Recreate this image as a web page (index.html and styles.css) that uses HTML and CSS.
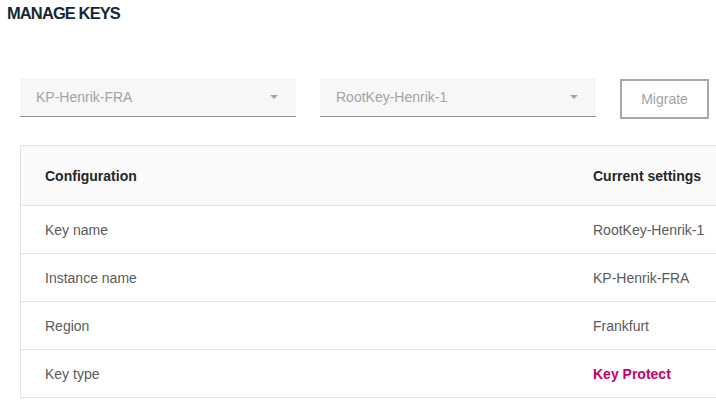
FILE: index.html
```html
<!DOCTYPE html>
<html>
<head>
<meta charset="utf-8">
<link rel="stylesheet" href="styles.css">
</head>
<body>
<div class="page">
  <h1 class="title">MANAGE KEYS</h1>
  <div class="controls">
    <div class="select">
      <span class="select-text">KP-Henrik-FRA</span>
      <span class="caret"></span>
    </div>
    <div class="select">
      <span class="select-text">RootKey-Henrik-1</span>
      <span class="caret"></span>
    </div>
    <button class="btn">Migrate</button>
  </div>
  <div class="table">
    <div class="row head">
      <div class="c1">Configuration</div>
      <div class="c2">Current settings</div>
    </div>
    <div class="row">
      <div class="c1">Key name</div>
      <div class="c2">RootKey-Henrik-1</div>
    </div>
    <div class="row">
      <div class="c1">Instance name</div>
      <div class="c2">KP-Henrik-FRA</div>
    </div>
    <div class="row">
      <div class="c1">Region</div>
      <div class="c2">Frankfurt</div>
    </div>
    <div class="row">
      <div class="c1">Key type</div>
      <div class="c2 accent">Key Protect</div>
    </div>
  </div>
</div>
</body>
</html>
```
FILE: styles.css
```css
html, body {
  margin: 0;
  padding: 0;
  background: #ffffff;
  overflow: hidden;
}
body {
  font-family: "Liberation Sans", Arial, sans-serif;
  width: 716px;
  height: 416px;
}
.page {
  padding: 3px 0 0 20px;
}
.title {
  margin: 0 0 0 -13px;
  font-size: 16.5px;
  font-weight: 700;
  letter-spacing: -0.9px;
  color: #152935;
  line-height: 20px;
}
.controls {
  display: flex;
  align-items: flex-start;
  gap: 24px;
  margin-top: 55px;
}
.select {
  width: 276px;
  height: 39px;
  box-sizing: border-box;
  background: #f7f7f7;
  border-bottom: 1px solid #8f8f8f;
  display: flex;
  align-items: center;
  justify-content: space-between;
  padding: 0 18px 0 16px;
}
.select-text {
  font-size: 14px;
  color: #a3a3a3;
}
.caret {
  width: 0;
  height: 0;
  border-left: 4px solid transparent;
  border-right: 4px solid transparent;
  border-top: 4px solid #a3a3a3;
}
.btn {
  width: 89px;
  height: 40px;
  margin-top: 1px;
  box-sizing: border-box;
  border: 2px solid #a8a8a8;
  background: #ffffff;
  font-family: "Liberation Sans", Arial, sans-serif;
  font-size: 14px;
  color: #a3a3a3;
  padding: 0;
}
.table {
  margin-top: 26px;
  width: 720px;
  border-left: 1px solid #e3e3e3;
  border-top: 1px solid #e3e3e3;
}
.row {
  display: flex;
  align-items: center;
  height: 48px;
  box-sizing: border-box;
  border-bottom: 1px solid #e3e3e3;
  font-size: 14px;
  color: #5a5a5a;
}
.row.head {
  height: 60px;
  background: #fafafa;
  font-weight: 700;
  color: #262626;
}
.c1 {
  width: 548px;
  padding-left: 24px;
}
.c2 {
  flex: 1;
}
.accent {
  color: #c4006b;
  font-weight: 700;
}
```
